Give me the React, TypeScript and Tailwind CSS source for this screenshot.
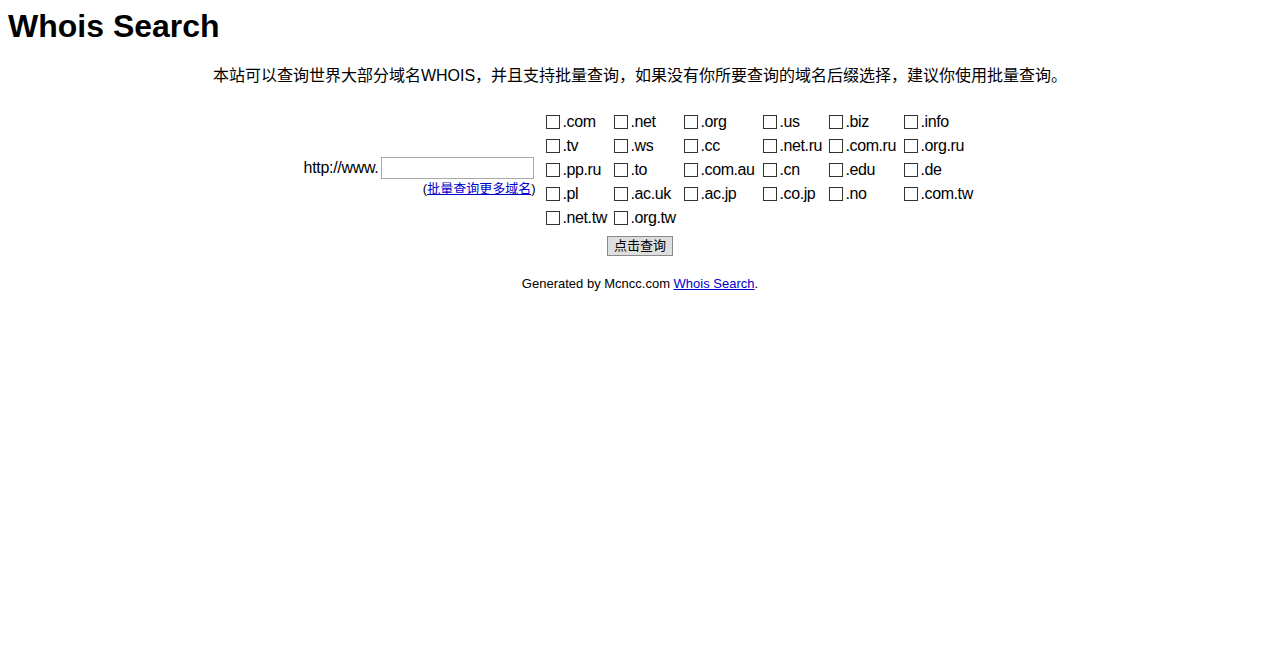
import { useState } from "react";

const suffixes = [
  ".com", ".net", ".org", ".us", ".biz", ".info",
  ".tv", ".ws", ".cc", ".net.ru", ".com.ru", ".org.ru",
  ".pp.ru", ".to", ".com.au", ".cn", ".edu", ".de",
  ".pl", ".ac.uk", ".ac.jp", ".co.jp", ".no", ".com.tw",
  ".net.tw", ".org.tw",
];

const font = { fontFamily: '"Liberation Sans", Arial, "Noto Sans CJK SC", sans-serif' };

export default function App() {
  const [domain, setDomain] = useState("");
  const [checked, setChecked] = useState<Record<string, boolean>>({});

  const toggle = (s: string) => setChecked((c) => ({ ...c, [s]: !c[s] }));

  return (
    <div className="min-h-[648px] bg-white text-black" style={font}>
      <h1 className="px-2 pt-[8px] text-[32px] font-bold leading-[37px]">Whois Search</h1>

      <p className="mt-[21px] text-center text-[16px] leading-[20px]">
        本站可以查询世界大部分域名WHOIS，并且支持批量查询，如果没有你所要查询的域名后缀选择，建议你使用批量查询。
      </p>

      <form className="mt-[24px]" onSubmit={(e) => e.preventDefault()}>
        <div className="flex justify-center">
          {/* 域名输入 */}
          <div className="mt-[47px] mr-[11px] flex w-[231px] flex-col items-end self-start">
            <div className="mr-[2px] flex items-center">
              <span className="text-[16px] leading-[20px] tracking-[-0.3px]">http://www.</span>
              <input
                value={domain}
                onChange={(e) => setDomain(e.target.value)}
                className="ml-[2px] h-[22px] w-[153px] border border-[#a9a9a9] bg-white px-1 text-[13px] outline-none"
              />
            </div>
            <div className="mt-[2px] text-[13px] leading-[16px]">
              (<a href="#" className="text-[#0000cc] underline">批量查询更多域名</a>)
            </div>
          </div>

          {/* 后缀选择 */}
          <div className="grid w-[429px] grid-cols-[68px_70px_79px_66px_75px_71px]">
            {suffixes.map((s) => (
              <label key={s} className="flex h-[24px] cursor-default items-center">
                <input
                  type="checkbox"
                  checked={!!checked[s]}
                  onChange={() => toggle(s)}
                  className="m-0 -ml-px h-[14px] w-[14px] appearance-none border border-[#333] bg-white checked:bg-[#333]"
                />
                <span className="ml-[3px] text-[16px] leading-[20px] tracking-[-0.4px]">{s}</span>
              </label>
            ))}
          </div>
        </div>

        <div className="mt-[6px] flex justify-center">
          <button
            type="submit"
            className="h-[20px] w-[66px] border border-[#8a8a8a] bg-[#dedede] text-[13px] leading-[16px]"
          >
            点击查询
          </button>
        </div>
      </form>

      <p className="mt-[20px] text-center text-[13px] leading-[16px]">
        Generated by Mcncc.com <a href="#" className="text-[#0000cc] underline">Whois Search</a>.
      </p>
    </div>
  );
}
